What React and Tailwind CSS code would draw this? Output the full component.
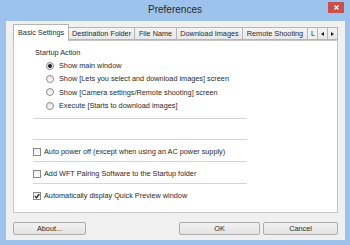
import React from 'react';

const font = { fontFamily: '"Liberation Sans", Arial, sans-serif' };

const tabs = [
  { label: 'Destination Folder', w: 'w-[66px]' },
  { label: 'File Name', w: 'w-[42px]' },
  { label: 'Download Images', w: 'w-[66px]' },
  { label: 'Remote Shooting', w: 'w-[65px]' },
];

const radios = [
  'Show main window',
  'Show [Lets you select and download images] screen',
  'Show [Camera settings/Remote shooting] screen',
  'Execute [Starts to download images]',
];

const checks = [
  { label: 'Auto power off (except when using an AC power supply)', checked: false },
  { label: 'Add WFT Pairing Software to the Startup folder', checked: false },
  { label: 'Automatically display Quick Preview window', checked: true },
];

const Separator = ({ className = '' }) => (
  <div className={`ml-[19px] w-[214px] h-[2px] border-t border-[#d5d5d5] border-b border-b-white ${className}`} />
);

const Radio = ({ checked }) => (
  <span className="w-[8px] h-[8px] rounded-full border border-[#8a8a8a] bg-gradient-to-b from-[#e6e6e6] to-white flex items-center justify-center shrink-0">
    {checked && <span className="w-[4px] h-[4px] rounded-full bg-[#1c1c1c]" />}
  </span>
);

const Checkbox = ({ checked }) => (
  <span className="w-[8px] h-[8px] border border-[#8a8a8a] bg-gradient-to-b from-[#ececec] to-white flex items-center justify-center shrink-0">
    {checked && (
      <svg width="6" height="6" viewBox="0 0 6 6">
        <path d="M0.8 3.1 L2.4 4.7 L5.3 1.2" fill="none" stroke="#1c1c1c" strokeWidth="1.3" />
      </svg>
    )}
  </span>
);

const Button = ({ children, className = '' }) => (
  <button className={`h-[13px] border border-[#acacac] rounded-[2px] bg-gradient-to-b from-[#f2f2f2] to-[#e3e3e3] text-[7.3px] text-[#2a2a2a] leading-none flex items-center justify-center ${className}`}>
    {children}
  </button>
);

export default function App() {
  return (
    <div style={font} className="w-[350px] h-[245px] bg-[#9dc2eb] flex flex-col overflow-hidden">
      {/* Title bar */}
      <div className="h-[21px] grid grid-cols-[1fr_auto_1fr] items-start">
        <div />
        <div className="pt-[4px] text-[10px] leading-[12px] text-[#2a2a2a]">Preferences</div>
        <div className="flex justify-end pr-[6px] pt-[2px]">
          <div className="w-[16px] h-[11px] bg-[#c7504c] flex items-center justify-center">
            <svg width="5" height="5" viewBox="0 0 5 5">
              <path d="M0.5 0.5 L4.5 4.5 M4.5 0.5 L0.5 4.5" stroke="white" strokeWidth="1.2" />
            </svg>
          </div>
        </div>
      </div>

      {/* Client area */}
      <div className="flex-1 mr-[5px] ml-[6px] mb-[5px] bg-[#f0f0f0] flex flex-col pl-[7px] pr-[7px] pt-[3px]">
        {/* Tab strip */}
        <div className="h-[16px] flex items-end relative z-10">
          <div className="w-[56px] h-[17px] -mb-px bg-white border border-b-0 border-[#b5b5b5] text-[7.3px] text-[#2a2a2a] pl-[4px] pt-[4px] leading-none whitespace-nowrap">
            Basic Settings
          </div>
          {tabs.map((t) => (
            <div
              key={t.label}
              className={`${t.w} h-[13px] border border-l-0 border-[#b5b5b5] bg-gradient-to-b from-[#f4f4f4] to-[#e8e8e8] text-[7.3px] text-[#2a2a2a] flex items-center justify-center leading-none whitespace-nowrap`}
            >
              {t.label}
            </div>
          ))}
          <div className="w-[10px] h-[13px] border border-l-0 border-[#b5b5b5] bg-[#f0f0f0] text-[7.3px] text-[#2a2a2a] flex items-center pl-[3px] leading-none overflow-hidden">
            L
          </div>
          <div className="w-[10px] h-[13px] border border-l-0 border-[#b5b5b5] bg-gradient-to-b from-[#f4f4f4] to-[#e6e6e6] flex items-center justify-center">
            <svg width="3" height="4" viewBox="0 0 3 4"><path d="M3 0 L0 2 L3 4 Z" fill="#1e1e1e" /></svg>
          </div>
          <div className="w-[10px] h-[13px] border border-l-0 border-[#b5b5b5] bg-gradient-to-b from-[#f4f4f4] to-[#e6e6e6] flex items-center justify-center">
            <svg width="3" height="4" viewBox="0 0 3 4"><path d="M0 0 L3 2 L0 4 Z" fill="#1e1e1e" /></svg>
          </div>
        </div>

        {/* Panel */}
        <div className="h-[173px] bg-white border border-[#c6c6c6] flex flex-col text-[7.3px] text-[#2a2a2a] leading-none">
          <div className="mt-[6px] h-[12px] pl-[21px] flex items-center">Startup Action</div>
          <div className="flex flex-col">
            {radios.map((r, i) => (
              <div key={r} className="h-[13.33px] pl-[32px] flex items-center gap-[5px] whitespace-nowrap">
                <Radio checked={i === 0} />
                <span>{r}</span>
              </div>
            ))}
          </div>
          <Separator className="mt-[6px]" />
          <Separator className="mt-[19px]" />
          {checks.map((c, i) => (
            <React.Fragment key={c.label}>
              <div className="mt-[5px] h-[11px] pl-[19px] flex items-center gap-[3px] whitespace-nowrap">
                <Checkbox checked={c.checked} />
                <span>{c.label}</span>
              </div>
              {i < checks.length - 1 && <Separator className="mt-[4px]" />}
            </React.Fragment>
          ))}
        </div>

        {/* Buttons */}
        <div className="mt-[9px] flex">
          <Button className="w-[73px]">About...</Button>
          <Button className="w-[81px] ml-auto">OK</Button>
          <Button className="w-[75px] ml-[3px]">Cancel</Button>
        </div>
      </div>
    </div>
  );
}
